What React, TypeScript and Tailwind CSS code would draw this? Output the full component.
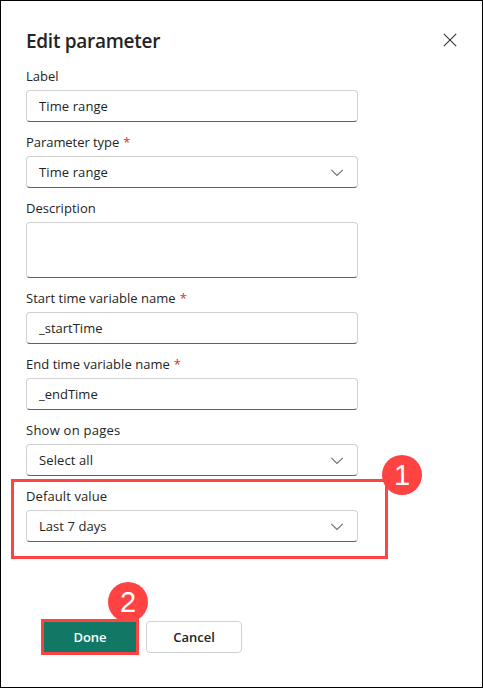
import React from "react";

function Chevron() {
  return (
    <svg width="14" height="8" viewBox="0 0 14 8" fill="none" stroke="#707070" strokeWidth="1.15" className="mt-px">
      <path d="M1.2 0.8 L7 6.5 L12.8 0.8" />
    </svg>
  );
}

type FieldProps = {
  label: string;
  labelSpacing?: string;
  value?: string;
  valueSpacing?: string;
  required?: boolean;
  select?: boolean;
  tall?: boolean;
};

function Field({ label, labelSpacing = "", value, valueSpacing = "", required, select, tall }: FieldProps) {
  return (
    <div className="flex flex-col gap-1">
      <div className="flex h-5 items-center whitespace-pre leading-5">
        <span className={labelSpacing}>{label}</span>
        {required && <span className="ml-1 text-[#d92f35]">*</span>}
      </div>
      <div
        className={`flex items-center justify-between rounded-[4px] border border-[#d1d1d1] border-b-[#616161] pl-3 pr-[13px] ${
          tall ? "h-14" : "h-8"
        }`}
      >
        <span className={`pt-0.5 ${valueSpacing}`}>{value}</span>
        {select && <Chevron />}
      </div>
    </div>
  );
}

function Badge({ children }: { children: React.ReactNode }) {
  return (
    <div className="flex size-10 items-center justify-center rounded-full bg-[#ff4343] font-['Liberation_Sans',sans-serif] text-[29px] font-normal leading-none text-white">
      {children}
    </div>
  );
}

export default function App() {
  return (
    <div className="flex h-[688px] w-[483px] flex-col border border-black bg-white pl-[25px] font-['Open_Sans','Noto_Sans',sans-serif] text-[13px] text-[#242424]">
      <header className="mt-[25px] flex h-7 items-center justify-between pr-[25px]">
        <h1 className="pt-0.5 text-[19px] font-semibold leading-7 tracking-[-0.28px]">Edit parameter</h1>
        <svg width="14" height="14" viewBox="0 0 14 14" stroke="#333333" strokeWidth="1.1">
          <path d="M0.8 0.8 L13.2 13.2 M13.2 0.8 L0.8 13.2" />
        </svg>
      </header>
      <main className="mt-3 flex w-[332px] flex-col gap-[10px]">
        <Field label="Label" value="Time range" valueSpacing="tracking-[0.1px]" />
        <Field label="Parameter type" labelSpacing="tracking-[-0.05px]" value="Time range" valueSpacing="tracking-[0.1px]" required select />
        <Field label="Description" labelSpacing="tracking-[0.03px]" tall />
        <Field label="Start time variable name" labelSpacing="tracking-[0.03px]" value="_startTime" required />
        <Field label="End time variable name" labelSpacing="tracking-[0.03px]" value="_endTime" required />
        <Field label="Show on pages" labelSpacing="tracking-[0.25px]" value="Select all" valueSpacing="tracking-[0.1px]" select />
        <div className="relative">
          <Field label="Default value" labelSpacing="tracking-[0.1px]" value="Last 7 days" valueSpacing="tracking-[0.05px]" select />
          <div className="absolute -left-[15px] -top-[7px] h-20 w-[377px] border-[3px] border-[#ff4343]" />
          <div className="absolute -top-[31px] left-[356px]">
            <Badge>1</Badge>
          </div>
        </div>
      </main>
      <footer className="ml-[15px] mt-[77px] flex items-center gap-[7px] font-semibold">
        <div className="relative h-9 w-[98px]">
          <div className="absolute -top-[37px] left-[67px]">
            <Badge>2</Badge>
          </div>
          <button className="relative flex h-9 w-[98px] items-center justify-center border-[3px] border-[#ff4343] bg-[#117865] pt-0.5 text-white">
            Done
          </button>
        </div>
        <button className="flex h-8 w-24 items-center justify-center rounded-[4px] border border-[#d1d1d1] bg-white pt-0.5">
          Cancel
        </button>
      </footer>
    </div>
  );
}
